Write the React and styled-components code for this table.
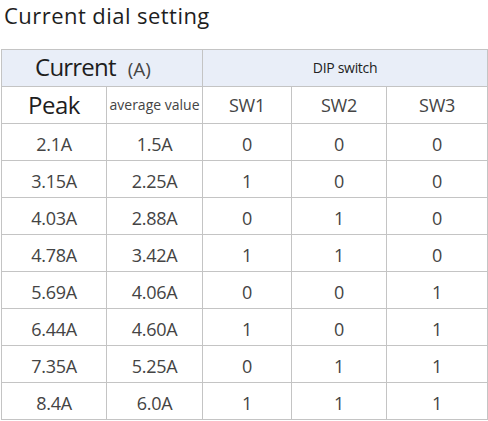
import React from "react";
import styled, { createGlobalStyle } from "styled-components";

const Global = createGlobalStyle`
  html, body { margin: 0; padding: 0; background: #fff; }
  body { font-family: "Open Sans", "Noto Sans", sans-serif; color: #3a3a3a; }
`;

const Page = styled.div`
  width: 488px;
  height: 421px;
  overflow: hidden;
  display: flex;
  flex-direction: column;
`;

const Title = styled.h1`
  flex: 0 0 49px;
  margin: 0;
  padding: 0 0 0 4px;
  font-weight: 400;
  font-size: 22px;
  line-height: normal;
  color: #1e1e1e;
  letter-spacing: 0.45px;
`;

const Table = styled.table`
  flex: 0 0 auto;
  margin-left: 1px;
  border-collapse: collapse;
  table-layout: fixed;
  width: 486px;
`;

const Col = styled.col`
  width: ${(p) => p.$w}px;
`;

const Cell = styled.td`
  border: 1px solid #c4c4c4;
  height: ${(p) => (p.$low ? 33 : 36)}px;
  padding: ${(p) => (p.$low ? "3px 0 0" : p.$padR ? `0 ${p.$padR}px 0 0` : "0")};
  text-align: center;
  vertical-align: middle;
  font-weight: 400;
  font-size: ${(p) => p.$size || 18}px;
  line-height: 24px;
  color: ${(p) => p.$color || "#444"};
  background: ${(p) => (p.$head ? "#e9eef8" : "#fff")};
  white-space: nowrap;
  letter-spacing: ${(p) => (p.$ls != null ? p.$ls : -0.3)}px;
`;

const Unit = styled.span`
  font-size: 19px;
  margin-left: 12px;
  letter-spacing: 0;
  color: #444;
`;

const rows = [
  ["2.1A", "1.5A", 0, 0, 0],
  ["3.15A", "2.25A", 1, 0, 0],
  ["4.03A", "2.88A", 0, 1, 0],
  ["4.78A", "3.42A", 1, 1, 0],
  ["5.69A", "4.06A", 0, 0, 1],
  ["6.44A", "4.60A", 1, 0, 1],
  ["7.35A", "5.25A", 0, 1, 1],
  ["8.4A", "6.0A", 1, 1, 1],
];

const widths = [105, 96, 89, 95, 101];

export default function App() {
  return (
    <Page>
      <Global />
      <Title>Current dial setting</Title>
      <Table>
        <colgroup>
          {widths.map((w, i) => (
            <Col key={i} $w={w} />
          ))}
        </colgroup>
        <tbody>
          <tr>
            <Cell as="th" colSpan={2} $head $size={24} $ls={-0.8} $padR={18} $color="#1e1e1e">
              Current<Unit>(A)</Unit>
            </Cell>
            <Cell as="th" colSpan={3} $head $size={14} $color="#222">
              DIP switch
            </Cell>
          </tr>
          <tr>
            <Cell $size={24} $ls={-0.5} $color="#1e1e1e">Peak</Cell>
            <Cell $size={14} $ls={0} $color="#444">average value</Cell>
            <Cell>SW1</Cell>
            <Cell>SW2</Cell>
            <Cell>SW3</Cell>
          </tr>
          {rows.map((r, i) => (
            <tr key={i}>
              {r.map((v, j) => (
                <Cell key={j} $low>
                  {v}
                </Cell>
              ))}
            </tr>
          ))}
        </tbody>
      </Table>
    </Page>
  );
}
